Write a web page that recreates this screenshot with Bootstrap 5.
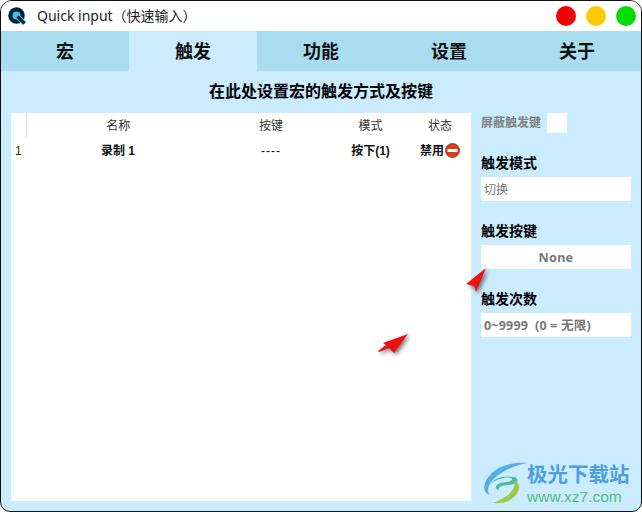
<!DOCTYPE html>
<html lang="zh">
<head>
  <title>Quick input</title>
  <meta name="viewport" content="width=device-width, initial-scale=1.0">
  <link href="https://cdn.jsdelivr.net/npm/bootstrap@5.3.0/dist/css/bootstrap.min.css" rel="stylesheet">
  <script src="https://cdn.jsdelivr.net/npm/bootstrap@5.3.0/dist/js/bootstrap.bundle.min.js"></script>
  <style>
    html, body { height: 100%; background: #fff; }
    body {
      font-family: "Noto Sans", "Noto Sans CJK SC", sans-serif;
      font-size: 12px;
      color: #000;
      overflow: hidden;
    }
    .app-window {
      width: 642px;
      height: 512px;
      border: 1px solid #111;
      border-radius: 12px 12px 10px 10px;
      overflow: hidden;
      background: #cbecff;
      position: relative;
    }
    .title-bar { height: 30px; background: #fff; padding: 0 5px 0 6px; }
    .app-name { font-size: 14px; margin-left: 10px; color: #222; line-height: 30px; }
    .dot { width: 20px; height: 20px; border-radius: 50%; display: block; }
    .dot-red { background: #f00000; }
    .dot-yellow { background: #ffcb00; }
    .dot-green { background: #00dd00; }
    .dot-gap { gap: 10px; }
    .tab-row { height: 40px; background: #a8dcee; }
    .tab-row .nav-link {
      width: 128px;
      height: 40px;
      padding: 0;
      line-height: 40px;
      text-align: center;
      font-size: 18px;
      font-weight: 700;
      color: #111;
      border-radius: 0;
    }
    .tab-row .nav-link.active { background: #cbecff; }
    .page-head { height: 42px; line-height: 41px; font-size: 16px; font-weight: 700; text-align: center; }
    .page-body { padding: 0 10px; gap: 10px; }
    .list-box { width: 460px; height: 388px; background: #fff; }
    .macro-table { table-layout: fixed; width: 460px; margin: 0; }
    .macro-table th, .macro-table td {
      border: 0;
      padding: 0;
      text-align: center;
      vertical-align: middle;
      background: transparent;
      color: #111;
      font-family: "Liberation Sans", "Noto Sans CJK SC", sans-serif;
    }
    .macro-table th { height: 25px; font-weight: 400; font-size: 12px; color: #333; }
    .macro-table td { height: 25px; font-weight: 700; font-size: 12px; }
    .macro-table th.idx-col { border-right: 1px solid #e2e2e2; }
    .macro-table td.idx-col { text-align: left; padding-left: 4px; font-weight: 400; color: #3a2a10; }
    .macro-table td.key-cell { font-weight: 400; letter-spacing: 1px; }
    .stop-icon { width: 15px; height: 15px; vertical-align: -3px; margin-left: 1px; }
    .side-panel { width: 150px; }
    .block-label { font-size: 14px; font-weight: 700; line-height: 18px; margin-bottom: 5px; }
    .side-field {
      height: 24px;
      line-height: 25px;
      background: #fff;
      color: #777;
      padding: 0 3px;
      font-size: 12px;
      margin-bottom: 21px;
    }
    .shield-row { height: 20px; margin-bottom: 21px; }
    .shield-label { color: #808080; font-size: 12px; font-weight: 700; }
    .shield-box { width: 20px; height: 20px; background: #fff; margin-left: 6px; }
    .field-center { text-align: center; font-weight: 700; font-size: 12.5px; letter-spacing: .3px; }
    .field-bold { font-weight: 700; font-size: 12.5px; white-space: pre; letter-spacing: .2px; }
    .mark-arrow { position: absolute; filter: drop-shadow(2px 2px 2px rgba(0,0,0,.55)); }
    .arrow-a { left: 463px; top: 265px; }
    .arrow-b { left: 375px; top: 331px; }
    .site-logo { position: absolute; left: 482px; top: 459px; }
    .site-name { position: absolute; left: 526px; top: 459px; font-size: 20.5px; font-weight: 700; line-height: 28px; color: #4f9fdc; white-space: nowrap; }
    .site-url { position: absolute; left: 526px; top: 487px; font-family: "Liberation Sans", sans-serif; font-size: 15.5px; line-height: 18px; color: #52bd86; white-space: nowrap; }
  </style>
</head>
<body>
  <div class="app-window">
    <div class="title-bar d-flex align-items-center">
      <svg width="20" height="20" viewBox="0 0 20 20">
        <circle cx="9.5" cy="9.5" r="8.6" fill="#35c4ee"/>
        <circle cx="9.5" cy="9.5" r="6" fill="none" stroke="#041c26" stroke-width="4"/>
        <path d="M11 11l6.5 6.5" stroke="#35c4ee" stroke-width="5"/>
        <path d="M10.5 10.5l7 7" stroke="#041c26" stroke-width="3"/>
      </svg>
      <span class="app-name">Quick input（快速输入）</span>
      <div class="ms-auto d-flex dot-gap">
        <span class="dot dot-red"></span>
        <span class="dot dot-yellow"></span>
        <span class="dot dot-green"></span>
      </div>
    </div>

    <ul class="nav tab-row flex-nowrap">
      <li class="nav-item"><a class="nav-link" href="#">宏</a></li>
      <li class="nav-item"><a class="nav-link active" href="#">触发</a></li>
      <li class="nav-item"><a class="nav-link" href="#">功能</a></li>
      <li class="nav-item"><a class="nav-link" href="#">设置</a></li>
      <li class="nav-item"><a class="nav-link" href="#">关于</a></li>
    </ul>

    <div class="page-head">在此处设置宏的触发方式及按键</div>

    <div class="page-body d-flex">
      <div class="list-box">
        <table class="table macro-table">
          <colgroup>
            <col style="width: 15px">
            <col style="width: 184px">
            <col style="width: 122px">
            <col style="width: 77px">
            <col style="width: 62px">
          </colgroup>
          <thead>
            <tr><th class="idx-col"></th><th>名称</th><th>按键</th><th>模式</th><th>状态</th></tr>
          </thead>
          <tbody>
            <tr>
              <td class="idx-col">1</td>
              <td>录制 1</td>
              <td class="key-cell">----</td>
              <td>按下(1)</td>
              <td>禁用<svg class="stop-icon" viewBox="0 0 15 15"><circle cx="7.5" cy="7.5" r="7" fill="#e03a1c" stroke="#8f2a14" stroke-width=".8"/><rect x="2.5" y="6" width="10" height="3" fill="#fff"/></svg></td>
            </tr>
          </tbody>
        </table>
      </div>

      <div class="side-panel">
        <div class="shield-row d-flex align-items-center">
          <span class="shield-label">屏蔽触发键</span>
          <span class="shield-box"></span>
        </div>
        <div class="block-label">触发模式</div>
        <div class="side-field">切换</div>
        <div class="block-label">触发按键</div>
        <div class="side-field field-center">None</div>
        <div class="block-label">触发次数</div>
        <div class="side-field field-bold">0~9999  (0 = 无限)</div>
      </div>
    </div>

    <svg class="mark-arrow arrow-a" width="26" height="30" viewBox="0 0 26 30">
      <path d="M22 2L2 18l8 2 2 6z" fill="#f01010"/>
    </svg>
    <svg class="mark-arrow arrow-b" width="34" height="26" viewBox="0 0 34 26">
      <path d="M32 2L7 11l3 2-8 6 1 1 10-4 5 5z" fill="#f01010"/>
    </svg>

    <svg class="site-logo" width="46" height="44" viewBox="0 0 46 44">
      <path d="M45 3C28 1 8 8 2 23c-2 6 0 10 4 12C3 27 8 19 20 12 28 7 37 4 45 3z" fill="#55aee6"/>
      <path d="M7 25c3-7 14-10 24-8 4 1 5 4 2 6-5 3-15 1-17 5-1 2 1 3 4 2-6 1-9-2-6-5 4-4 12-2 15-5 1-2-3-3-8-2-6 1-11 3-14 7z" fill="#4db89c"/>
      <path d="M10 43c14 2 27-7 26-17-1-4-3-5-5-5 2 5-2 12-9 16-5 3-9 5-12 6z" fill="#9cc94a"/>
    </svg>
    <div class="site-name">极光下载站</div>
    <div class="site-url">www.xz7.com</div>
  </div>
</body>
</html>
